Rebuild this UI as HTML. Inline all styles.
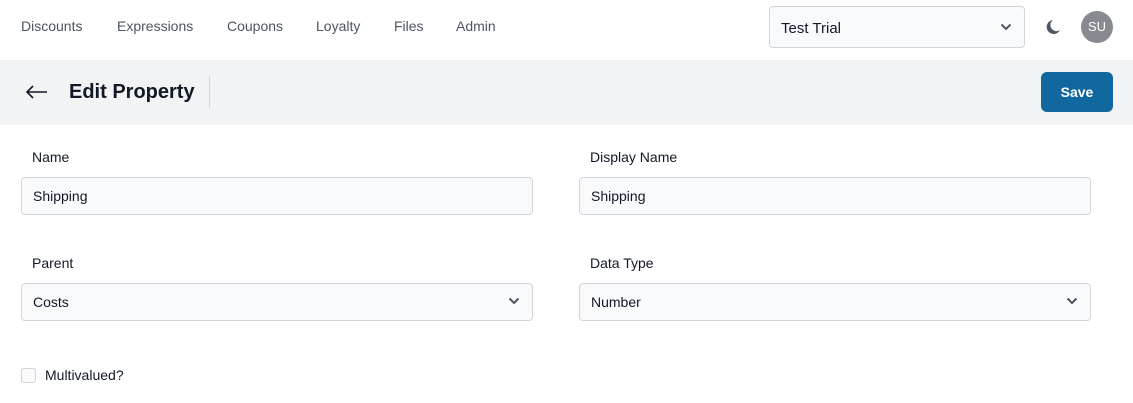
<!DOCTYPE html>
<html><head><style>
*{box-sizing:border-box;margin:0;padding:0}
body{width:1133px;height:403px;background:#fff;font-family:"Liberation Sans",sans-serif;color:#111827;position:relative;overflow:hidden}
.nav a{position:absolute;top:18px;font-size:14px;color:#4b5563}
.abs{position:absolute}
.inp{position:absolute;height:38px;border:1px solid #d1d5db;border-radius:4px;background:#f9fafb;font-size:14px;padding-left:11px;line-height:36px;color:#111827}
.lbl{position:absolute;font-size:14px;color:#111827}
.chev{position:absolute;right:12px;top:13px}
</style></head><body>
<div class="nav"><a style="left:21px">Discounts</a><a style="left:117px">Expressions</a><a style="left:227px">Coupons</a><a style="left:316px">Loyalty</a><a style="left:394px">Files</a><a style="left:456px">Admin</a></div>
<div class="inp" style="left:769px;top:6px;width:256px;height:42px;line-height:43px;font-size:15px">Test Trial
<svg class="chev" style="top:16px" width="12" height="8" viewBox="0 0 12 8"><path d="M1.5 1.5L6 6l4.5-4.5" fill="none" stroke="#4b5563" stroke-width="2"/></svg></div>
<svg class="abs" style="left:1044px;top:18px" width="18" height="18" viewBox="0 0 18 18"><path d="M9 2A7 7 0 1 0 16 12 6 6 0 0 1 9 2z" fill="#4b5563"/></svg>
<div class="abs" style="left:1081px;top:11px;width:32px;height:32px;border-radius:50%;background:#878b90;color:#fff;font-size:13px;text-align:center;line-height:32px">SU</div>
<div class="abs" style="left:0;top:60px;width:1133px;height:65px;background:#f2f3f5"></div>
<svg class="abs" style="left:26px;top:85px" width="22" height="14" viewBox="0 0 22 14"><path d="M21 7H2M7 1L1 7l6 6" fill="none" stroke="#111827" stroke-width="1.6"/></svg>
<div class="abs" style="left:69px;top:81px;font-size:20px;font-weight:bold">Edit Property</div>
<div class="abs" style="left:209px;top:76px;width:1px;height:32px;background:#d1d5db"></div>
<div class="abs" style="left:1041px;top:72px;width:72px;height:40px;background:#11689f;border-radius:6px;color:#fff;font-weight:bold;font-size:14px;text-align:center;line-height:40px">Save</div>
<div class="lbl" style="left:32px;top:149px">Name</div>
<div class="inp" style="left:21px;top:177px;width:512px">Shipping</div>
<div class="lbl" style="left:590px;top:149px">Display Name</div>
<div class="inp" style="left:579px;top:177px;width:512px">Shipping</div>
<div class="lbl" style="left:32px;top:255px">Parent</div>
<div class="inp" style="left:21px;top:283px;width:512px">Costs<svg class="chev" width="12" height="8" viewBox="0 0 12 8"><path d="M1.5 1.5L6 6l4.5-4.5" fill="none" stroke="#4b5563" stroke-width="2"/></svg></div>
<div class="lbl" style="left:590px;top:255px">Data Type</div>
<div class="inp" style="left:579px;top:283px;width:512px">Number<svg class="chev" width="12" height="8" viewBox="0 0 12 8"><path d="M1.5 1.5L6 6l4.5-4.5" fill="none" stroke="#4b5563" stroke-width="2"/></svg></div>
<div class="abs" style="left:21px;top:368px;width:15px;height:15px;border:1px solid #d1d5db;border-radius:3px;background:#f9fafb"></div>
<div class="lbl" style="left:45px;top:367px">Multivalued?</div>
</body></html>
